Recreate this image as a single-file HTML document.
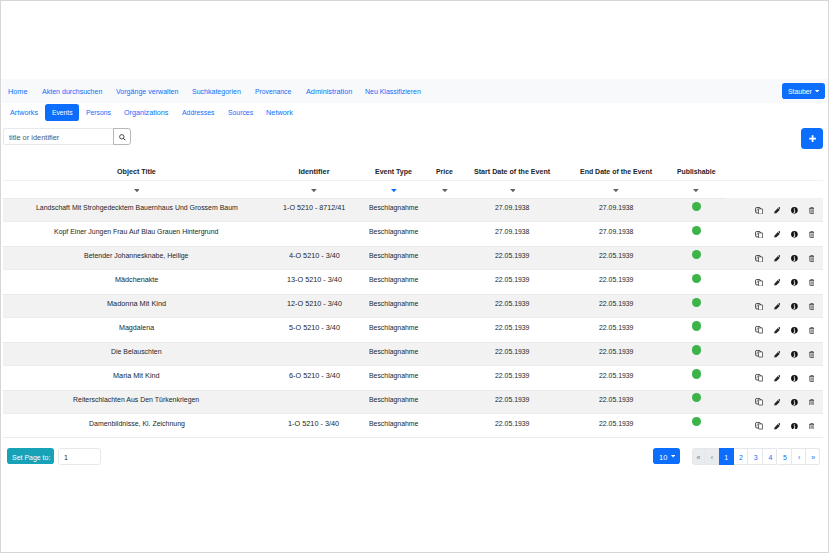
<!DOCTYPE html>
<html><head><meta charset="utf-8">
<style>
*{box-sizing:border-box;margin:0;padding:0}
html,body{width:829px;height:553px;overflow:hidden;background:#fff}
body{font-family:"Liberation Sans",sans-serif;font-size:6.9px;color:#212529;position:relative}
.frame{position:absolute;left:0;top:0;width:829px;height:553px;border:1px solid #d6d6d6}
.t{position:absolute;white-space:nowrap;transform-origin:0 0}
.navbar{position:absolute;left:2px;top:79px;width:826px;height:24.3px;background:#f8f9fa}
.btn-user{position:absolute;left:782px;top:82.8px;width:43.2px;height:16.2px;background:#0d6efd;border-radius:2.8px}
.pillbg{position:absolute;left:45.2px;top:103.6px;width:34.1px;height:17.4px;background:#0d6efd;border-radius:2.8px}
.search{position:absolute;left:3.4px;top:128px;width:110.5px;height:16.8px;border:1px solid #e6e8eb;border-right:none;border-radius:2.8px 0 0 2.8px}
.sbtn{position:absolute;left:113.3px;top:128px;width:17.9px;height:16.8px;border:1px solid #b3b8bd;border-radius:0 2.8px 2.8px 0}
.plus{position:absolute;left:801.4px;top:128.2px;width:21.8px;height:20.9px;background:#0d6efd;border-radius:3.5px}
.hline{position:absolute;left:3px;top:180px;width:820px;height:1px;background:#eff1f3}
.fline{position:absolute;left:3px;top:198px;width:722px;height:1px;background:#e9eaed}
.arr{position:absolute;top:189.7px;width:0;height:0;border-left:3.1px solid transparent;border-right:3.1px solid transparent;border-top:3.3px solid #6a6b6d}
.arr.blue{border-top-color:#0d6efd}
.row{position:absolute;left:3px;width:820px;height:24px}
.row.g{background:#f2f2f2}
.dot{position:absolute;width:9px;height:9.2px;border-radius:50%;background:#3db44a}
.ic{position:absolute}
.bline{position:absolute;left:3px;top:437px;width:820px;height:0.8px;background:#e9ebed}
.setbtn{position:absolute;left:6.9px;top:448.3px;width:47.5px;height:15.9px;background:#17a2b8;border-radius:2.8px}
.pin{position:absolute;left:58.4px;top:448.3px;width:42.9px;height:16.3px;border:0.6px solid #e6e8eb;border-radius:2.8px}
.ten{position:absolute;left:653.2px;top:448.2px;width:26.7px;height:16.3px;background:#0d6efd;border-radius:2.8px}
.pg{position:absolute;top:448.1px;height:16.5px;border:0.6px solid #e5e7ea;border-left:none}
.car{position:absolute;width:0;height:0;border-left:1.9px solid transparent;border-right:1.9px solid transparent;border-top:2.3px solid #fff}
</style></head><body>
<div class="frame"></div>
<div class="navbar"></div>
<span class="t" style="left:8.27px;top:86.61px;font-size:6.9px;line-height:10px;transform:scaleX(1.0584);color:#0d6efd">Home</span>
<span class="t" style="left:41.90px;top:86.61px;font-size:6.9px;line-height:10px;transform:scaleX(1.0233);color:#0d6efd">Akten durchsuchen</span>
<span class="t" style="left:115.90px;top:86.61px;font-size:6.9px;line-height:10px;transform:scaleX(1.0255);color:#0d6efd">Vorgänge verwalten</span>
<span class="t" style="left:192.39px;top:86.61px;font-size:6.9px;line-height:10px;transform:scaleX(1.0188);color:#0d6efd">Suchkategorien</span>
<span class="t" style="left:255.11px;top:86.61px;font-size:6.9px;line-height:10px;transform:scaleX(0.9865);color:#0d6efd">Provenance</span>
<span class="t" style="left:305.60px;top:86.61px;font-size:6.9px;line-height:10px;transform:scaleX(1.0605);color:#0d6efd">Administration</span>
<span class="t" style="left:365.29px;top:86.61px;font-size:6.9px;line-height:10px;transform:scaleX(1.0113);color:#0d6efd">Neu Klassifizieren</span>
<div class="btn-user"></div>
<span class="t" style="left:787.50px;top:86.61px;font-size:6.9px;line-height:10px;transform:scaleX(0.9887);color:#fff">Stauber</span>
<svg class="ic" style="left:815.3px;top:89.8px" width="4.2" height="2.6" viewBox="0 0 4.2 2.6"><path d="M0 0.1h4.2L2.1 2.5z" fill="#fff"/></svg>
<div class="pillbg"></div>
<span class="t" style="left:10.20px;top:108.27px;font-size:7.0px;line-height:10px;transform:scaleX(1.0287);color:#0d6efd">Artworks</span>
<span class="t" style="left:85.61px;top:108.27px;font-size:7.0px;line-height:10px;transform:scaleX(0.9728);color:#0d6efd">Persons</span>
<span class="t" style="left:124.19px;top:108.27px;font-size:7.0px;line-height:10px;transform:scaleX(1.0260);color:#0d6efd">Organizations</span>
<span class="t" style="left:182.00px;top:108.27px;font-size:7.0px;line-height:10px;transform:scaleX(0.9826);color:#0d6efd">Addresses</span>
<span class="t" style="left:227.71px;top:108.27px;font-size:7.0px;line-height:10px;transform:scaleX(0.9770);color:#0d6efd">Sources</span>
<span class="t" style="left:266.18px;top:108.27px;font-size:7.0px;line-height:10px;transform:scaleX(1.0486);color:#0d6efd">Network</span>
<span class="t" style="left:52.02px;top:108.27px;font-size:7.0px;line-height:10px;transform:scaleX(0.9614);color:#fff">Events</span>
<div class="search"></div>
<span class="t" style="left:8.69px;top:132.77px;font-size:7.0px;line-height:10px;transform:scaleX(1.0605);color:#53595f">title or identifier</span>
<div class="sbtn"></div>
<svg class="ic" style="left:118.9px;top:133.6px" width="7" height="7" viewBox="0 0 7 7"><circle cx="2.8" cy="2.8" r="2.2" fill="none" stroke="#2b2f33" stroke-width="0.85"/><path d="M4.35 4.35l1.9 1.9" stroke="#2b2f33" stroke-width="1"/></svg>
<div class="plus"></div>
<svg class="ic" style="left:808.9px;top:135px" width="7.2" height="7.2" viewBox="0 0 7.2 7.2"><path d="M3.6 0.2v6.8M0.2 3.6h6.8" stroke="#fff" stroke-width="1.8"/></svg>
<span class="t" style="left:117.31px;top:166.54px;font-size:7.4px;line-height:10px;transform:scaleX(0.9686);font-weight:700">Object Title</span>
<span class="t" style="left:298.40px;top:166.54px;font-size:7.4px;line-height:10px;font-weight:700">Identifier</span>
<span class="t" style="left:375.42px;top:166.54px;font-size:7.4px;line-height:10px;transform:scaleX(0.9500);font-weight:700">Event Type</span>
<span class="t" style="left:436.43px;top:166.54px;font-size:7.4px;line-height:10px;transform:scaleX(0.9264);font-weight:700">Price</span>
<span class="t" style="left:474.31px;top:166.54px;font-size:7.4px;line-height:10px;transform:scaleX(0.9609);font-weight:700">Start Date of the Event</span>
<span class="t" style="left:580.12px;top:166.54px;font-size:7.4px;line-height:10px;transform:scaleX(0.9433);font-weight:700">End Date of the Event</span>
<span class="t" style="left:676.83px;top:166.54px;font-size:7.4px;line-height:10px;transform:scaleX(0.9287);font-weight:700">Publishable</span>
<div class="hline"></div>
<svg class="ic" style="left:133.70px;top:189.3px" width="5.8" height="3.4" viewBox="0 0 5.8 3.4"><path d="M0 0.1h5.8L2.9 3.2z" fill="#5f6266"/></svg>
<svg class="ic" style="left:311.30px;top:189.3px" width="5.8" height="3.4" viewBox="0 0 5.8 3.4"><path d="M0 0.1h5.8L2.9 3.2z" fill="#5f6266"/></svg>
<svg class="ic" style="left:391.10px;top:189.3px" width="5.8" height="3.4" viewBox="0 0 5.8 3.4"><path d="M0 0.1h5.8L2.9 3.2z" fill="#0d6efd"/></svg>
<svg class="ic" style="left:442.00px;top:189.3px" width="5.8" height="3.4" viewBox="0 0 5.8 3.4"><path d="M0 0.1h5.8L2.9 3.2z" fill="#5f6266"/></svg>
<svg class="ic" style="left:509.60px;top:189.3px" width="5.8" height="3.4" viewBox="0 0 5.8 3.4"><path d="M0 0.1h5.8L2.9 3.2z" fill="#5f6266"/></svg>
<svg class="ic" style="left:613.40px;top:189.3px" width="5.8" height="3.4" viewBox="0 0 5.8 3.4"><path d="M0 0.1h5.8L2.9 3.2z" fill="#5f6266"/></svg>
<svg class="ic" style="left:693.30px;top:189.3px" width="5.8" height="3.4" viewBox="0 0 5.8 3.4"><path d="M0 0.1h5.8L2.9 3.2z" fill="#5f6266"/></svg>
<div class="row g" style="top:198px;height:24px;border-bottom:1px solid #ececee"></div>
<div class="row g" style="top:246px;height:24px;border-top:1px solid #e9eaed;border-bottom:1px solid #ececee"></div>
<div class="row g" style="top:294px;height:24px;border-top:1px solid #e9eaed;border-bottom:1px solid #ececee"></div>
<div class="row g" style="top:342px;height:24px;border-top:1px solid #e9eaed;border-bottom:1px solid #ececee"></div>
<div class="row g" style="top:390px;height:24px;border-top:1px solid #e9eaed;border-bottom:1px solid #ececee"></div>
<div class="fline"></div>
<span class="t" style="left:35.55px;top:203.47px;font-size:7.6px;line-height:10px;transform:scaleX(0.9140)">Landschaft Mit Strohgedecktem Bauernhaus Und Grossem Baum</span>
<span class="t" style="left:282.93px;top:203.47px;font-size:7.6px;line-height:10px;transform:scaleX(0.9464)">1-O 5210 - 8712/41</span>
<span class="t" style="left:369.16px;top:203.47px;font-size:7.6px;line-height:10px;transform:scaleX(0.9071)">Beschlagnahme</span>
<span class="t" style="left:495.28px;top:203.47px;font-size:7.6px;line-height:10px;transform:scaleX(0.9062)">27.09.1938</span>
<span class="t" style="left:599.08px;top:203.47px;font-size:7.6px;line-height:10px;transform:scaleX(0.9062)">27.09.1938</span>
<div class="dot" style="left:691.6px;top:201.70px"></div>
<svg class="ic" style="left:755px;top:206.70px" width="8.4" height="7.6" viewBox="0 0 8.4 7.6"><rect x="0.45" y="0.45" width="5.1" height="5.5" rx="1.5" fill="none" stroke="#2f3236" stroke-width="0.85"/><path d="M3.6 0.9L1.2 4.6" stroke="#2f3236" stroke-width="0.55"/><rect x="3.5" y="1.9" width="4.3" height="5.2" rx="0.5" fill="#fbfbfb" stroke="#3a3d41" stroke-width="0.75"/><path d="M7.8 2.2v4.8" stroke="#4a3f40" stroke-width="0.6"/></svg>
<svg class="ic" style="left:773.6px;top:207.30px" width="6.8" height="6.8" viewBox="0 0 6.8 6.8"><path d="M0.25 6.55l0.35-2.15 3.3-3.3 1.8 1.8-3.3 3.3z" fill="#24272b"/><path d="M4.3 0.7l0.55-0.5a0.6 0.6 0 0 1 0.8 0l0.95 0.95a0.6 0.6 0 0 1 0 0.8l-0.5 0.55z" fill="#1b1d20"/></svg>
<svg class="ic" style="left:790.9px;top:207.15px" width="6.8" height="6.8" viewBox="0 0 6.8 6.8"><circle cx="3.4" cy="3.35" r="3.3" fill="#111316"/><path d="M2.7 2.9h0.95v2.5M2.45 5.45h1.65" fill="none" stroke="#fff" stroke-width="0.85"/><circle cx="3.35" cy="1.75" r="0.6" fill="#fff"/></svg>
<svg class="ic" style="left:808.6px;top:207.10px" width="5.8" height="6.8" viewBox="0 0 5.8 6.8"><path d="M0.15 1.35h5.5" stroke="#2f3236" stroke-width="0.8"/><path d="M1.8 1.3V0.45h2.2v0.85" fill="none" stroke="#2f3236" stroke-width="0.65"/><path d="M0.85 1.6v4.4a0.55 0.55 0 0 0 0.55 0.45h3a0.55 0.55 0 0 0 0.55-0.45v-4.4" fill="none" stroke="#2f3236" stroke-width="0.8"/><path d="M2.35 2.4v3.2M3.45 2.4v3.2" stroke="#45484c" stroke-width="0.6"/></svg>
<span class="t" style="left:54.05px;top:227.42px;font-size:7.6px;line-height:10px;transform:scaleX(0.9143)">Kopf Einer Jungen Frau Auf Blau Grauen Hintergrund</span>
<span class="t" style="left:369.16px;top:227.42px;font-size:7.6px;line-height:10px;transform:scaleX(0.9071)">Beschlagnahme</span>
<span class="t" style="left:495.28px;top:227.42px;font-size:7.6px;line-height:10px;transform:scaleX(0.9062)">27.09.1938</span>
<span class="t" style="left:599.08px;top:227.42px;font-size:7.6px;line-height:10px;transform:scaleX(0.9062)">27.09.1938</span>
<div class="dot" style="left:691.6px;top:225.65px"></div>
<svg class="ic" style="left:755px;top:230.65px" width="8.4" height="7.6" viewBox="0 0 8.4 7.6"><rect x="0.45" y="0.45" width="5.1" height="5.5" rx="1.5" fill="none" stroke="#2f3236" stroke-width="0.85"/><path d="M3.6 0.9L1.2 4.6" stroke="#2f3236" stroke-width="0.55"/><rect x="3.5" y="1.9" width="4.3" height="5.2" rx="0.5" fill="#fbfbfb" stroke="#3a3d41" stroke-width="0.75"/><path d="M7.8 2.2v4.8" stroke="#4a3f40" stroke-width="0.6"/></svg>
<svg class="ic" style="left:773.6px;top:231.25px" width="6.8" height="6.8" viewBox="0 0 6.8 6.8"><path d="M0.25 6.55l0.35-2.15 3.3-3.3 1.8 1.8-3.3 3.3z" fill="#24272b"/><path d="M4.3 0.7l0.55-0.5a0.6 0.6 0 0 1 0.8 0l0.95 0.95a0.6 0.6 0 0 1 0 0.8l-0.5 0.55z" fill="#1b1d20"/></svg>
<svg class="ic" style="left:790.9px;top:231.10px" width="6.8" height="6.8" viewBox="0 0 6.8 6.8"><circle cx="3.4" cy="3.35" r="3.3" fill="#111316"/><path d="M2.7 2.9h0.95v2.5M2.45 5.45h1.65" fill="none" stroke="#fff" stroke-width="0.85"/><circle cx="3.35" cy="1.75" r="0.6" fill="#fff"/></svg>
<svg class="ic" style="left:808.6px;top:231.05px" width="5.8" height="6.8" viewBox="0 0 5.8 6.8"><path d="M0.15 1.35h5.5" stroke="#2f3236" stroke-width="0.8"/><path d="M1.8 1.3V0.45h2.2v0.85" fill="none" stroke="#2f3236" stroke-width="0.65"/><path d="M0.85 1.6v4.4a0.55 0.55 0 0 0 0.55 0.45h3a0.55 0.55 0 0 0 0.55-0.45v-4.4" fill="none" stroke="#2f3236" stroke-width="0.8"/><path d="M2.35 2.4v3.2M3.45 2.4v3.2" stroke="#45484c" stroke-width="0.6"/></svg>
<span class="t" style="left:84.20px;top:251.37px;font-size:7.6px;line-height:10px;transform:scaleX(0.9164)">Betender Johannesknabe, Heilige</span>
<span class="t" style="left:288.85px;top:251.37px;font-size:7.6px;line-height:10px;transform:scaleX(0.9545)">4-O 5210 - 3/40</span>
<span class="t" style="left:369.16px;top:251.37px;font-size:7.6px;line-height:10px;transform:scaleX(0.9071)">Beschlagnahme</span>
<span class="t" style="left:495.28px;top:251.37px;font-size:7.6px;line-height:10px;transform:scaleX(0.9062)">22.05.1939</span>
<span class="t" style="left:599.08px;top:251.37px;font-size:7.6px;line-height:10px;transform:scaleX(0.9062)">22.05.1939</span>
<div class="dot" style="left:691.6px;top:249.60px"></div>
<svg class="ic" style="left:755px;top:254.60px" width="8.4" height="7.6" viewBox="0 0 8.4 7.6"><rect x="0.45" y="0.45" width="5.1" height="5.5" rx="1.5" fill="none" stroke="#2f3236" stroke-width="0.85"/><path d="M3.6 0.9L1.2 4.6" stroke="#2f3236" stroke-width="0.55"/><rect x="3.5" y="1.9" width="4.3" height="5.2" rx="0.5" fill="#fbfbfb" stroke="#3a3d41" stroke-width="0.75"/><path d="M7.8 2.2v4.8" stroke="#4a3f40" stroke-width="0.6"/></svg>
<svg class="ic" style="left:773.6px;top:255.20px" width="6.8" height="6.8" viewBox="0 0 6.8 6.8"><path d="M0.25 6.55l0.35-2.15 3.3-3.3 1.8 1.8-3.3 3.3z" fill="#24272b"/><path d="M4.3 0.7l0.55-0.5a0.6 0.6 0 0 1 0.8 0l0.95 0.95a0.6 0.6 0 0 1 0 0.8l-0.5 0.55z" fill="#1b1d20"/></svg>
<svg class="ic" style="left:790.9px;top:255.05px" width="6.8" height="6.8" viewBox="0 0 6.8 6.8"><circle cx="3.4" cy="3.35" r="3.3" fill="#111316"/><path d="M2.7 2.9h0.95v2.5M2.45 5.45h1.65" fill="none" stroke="#fff" stroke-width="0.85"/><circle cx="3.35" cy="1.75" r="0.6" fill="#fff"/></svg>
<svg class="ic" style="left:808.6px;top:255.00px" width="5.8" height="6.8" viewBox="0 0 5.8 6.8"><path d="M0.15 1.35h5.5" stroke="#2f3236" stroke-width="0.8"/><path d="M1.8 1.3V0.45h2.2v0.85" fill="none" stroke="#2f3236" stroke-width="0.65"/><path d="M0.85 1.6v4.4a0.55 0.55 0 0 0 0.55 0.45h3a0.55 0.55 0 0 0 0.55-0.45v-4.4" fill="none" stroke="#2f3236" stroke-width="0.8"/><path d="M2.35 2.4v3.2M3.45 2.4v3.2" stroke="#45484c" stroke-width="0.6"/></svg>
<span class="t" style="left:114.78px;top:275.32px;font-size:7.6px;line-height:10px;transform:scaleX(0.9507)">Mädchenakte</span>
<span class="t" style="left:286.57px;top:275.32px;font-size:7.6px;line-height:10px;transform:scaleX(0.9571)">13-O 5210 - 3/40</span>
<span class="t" style="left:369.16px;top:275.32px;font-size:7.6px;line-height:10px;transform:scaleX(0.9071)">Beschlagnahme</span>
<span class="t" style="left:495.28px;top:275.32px;font-size:7.6px;line-height:10px;transform:scaleX(0.9062)">22.05.1939</span>
<span class="t" style="left:599.08px;top:275.32px;font-size:7.6px;line-height:10px;transform:scaleX(0.9062)">22.05.1939</span>
<div class="dot" style="left:691.6px;top:273.55px"></div>
<svg class="ic" style="left:755px;top:278.55px" width="8.4" height="7.6" viewBox="0 0 8.4 7.6"><rect x="0.45" y="0.45" width="5.1" height="5.5" rx="1.5" fill="none" stroke="#2f3236" stroke-width="0.85"/><path d="M3.6 0.9L1.2 4.6" stroke="#2f3236" stroke-width="0.55"/><rect x="3.5" y="1.9" width="4.3" height="5.2" rx="0.5" fill="#fbfbfb" stroke="#3a3d41" stroke-width="0.75"/><path d="M7.8 2.2v4.8" stroke="#4a3f40" stroke-width="0.6"/></svg>
<svg class="ic" style="left:773.6px;top:279.15px" width="6.8" height="6.8" viewBox="0 0 6.8 6.8"><path d="M0.25 6.55l0.35-2.15 3.3-3.3 1.8 1.8-3.3 3.3z" fill="#24272b"/><path d="M4.3 0.7l0.55-0.5a0.6 0.6 0 0 1 0.8 0l0.95 0.95a0.6 0.6 0 0 1 0 0.8l-0.5 0.55z" fill="#1b1d20"/></svg>
<svg class="ic" style="left:790.9px;top:279.00px" width="6.8" height="6.8" viewBox="0 0 6.8 6.8"><circle cx="3.4" cy="3.35" r="3.3" fill="#111316"/><path d="M2.7 2.9h0.95v2.5M2.45 5.45h1.65" fill="none" stroke="#fff" stroke-width="0.85"/><circle cx="3.35" cy="1.75" r="0.6" fill="#fff"/></svg>
<svg class="ic" style="left:808.6px;top:278.95px" width="5.8" height="6.8" viewBox="0 0 5.8 6.8"><path d="M0.15 1.35h5.5" stroke="#2f3236" stroke-width="0.8"/><path d="M1.8 1.3V0.45h2.2v0.85" fill="none" stroke="#2f3236" stroke-width="0.65"/><path d="M0.85 1.6v4.4a0.55 0.55 0 0 0 0.55 0.45h3a0.55 0.55 0 0 0 0.55-0.45v-4.4" fill="none" stroke="#2f3236" stroke-width="0.8"/><path d="M2.35 2.4v3.2M3.45 2.4v3.2" stroke="#45484c" stroke-width="0.6"/></svg>
<span class="t" style="left:106.97px;top:299.27px;font-size:7.6px;line-height:10px;transform:scaleX(0.9646)">Madonna Mit Kind</span>
<span class="t" style="left:286.57px;top:299.27px;font-size:7.6px;line-height:10px;transform:scaleX(0.9571)">12-O 5210 - 3/40</span>
<span class="t" style="left:369.16px;top:299.27px;font-size:7.6px;line-height:10px;transform:scaleX(0.9071)">Beschlagnahme</span>
<span class="t" style="left:495.28px;top:299.27px;font-size:7.6px;line-height:10px;transform:scaleX(0.9062)">22.05.1939</span>
<span class="t" style="left:599.08px;top:299.27px;font-size:7.6px;line-height:10px;transform:scaleX(0.9062)">22.05.1939</span>
<div class="dot" style="left:691.6px;top:297.50px"></div>
<svg class="ic" style="left:755px;top:302.50px" width="8.4" height="7.6" viewBox="0 0 8.4 7.6"><rect x="0.45" y="0.45" width="5.1" height="5.5" rx="1.5" fill="none" stroke="#2f3236" stroke-width="0.85"/><path d="M3.6 0.9L1.2 4.6" stroke="#2f3236" stroke-width="0.55"/><rect x="3.5" y="1.9" width="4.3" height="5.2" rx="0.5" fill="#fbfbfb" stroke="#3a3d41" stroke-width="0.75"/><path d="M7.8 2.2v4.8" stroke="#4a3f40" stroke-width="0.6"/></svg>
<svg class="ic" style="left:773.6px;top:303.10px" width="6.8" height="6.8" viewBox="0 0 6.8 6.8"><path d="M0.25 6.55l0.35-2.15 3.3-3.3 1.8 1.8-3.3 3.3z" fill="#24272b"/><path d="M4.3 0.7l0.55-0.5a0.6 0.6 0 0 1 0.8 0l0.95 0.95a0.6 0.6 0 0 1 0 0.8l-0.5 0.55z" fill="#1b1d20"/></svg>
<svg class="ic" style="left:790.9px;top:302.95px" width="6.8" height="6.8" viewBox="0 0 6.8 6.8"><circle cx="3.4" cy="3.35" r="3.3" fill="#111316"/><path d="M2.7 2.9h0.95v2.5M2.45 5.45h1.65" fill="none" stroke="#fff" stroke-width="0.85"/><circle cx="3.35" cy="1.75" r="0.6" fill="#fff"/></svg>
<svg class="ic" style="left:808.6px;top:302.90px" width="5.8" height="6.8" viewBox="0 0 5.8 6.8"><path d="M0.15 1.35h5.5" stroke="#2f3236" stroke-width="0.8"/><path d="M1.8 1.3V0.45h2.2v0.85" fill="none" stroke="#2f3236" stroke-width="0.65"/><path d="M0.85 1.6v4.4a0.55 0.55 0 0 0 0.55 0.45h3a0.55 0.55 0 0 0 0.55-0.45v-4.4" fill="none" stroke="#2f3236" stroke-width="0.8"/><path d="M2.35 2.4v3.2M3.45 2.4v3.2" stroke="#45484c" stroke-width="0.6"/></svg>
<span class="t" style="left:118.69px;top:323.22px;font-size:7.6px;line-height:10px;transform:scaleX(0.9358)">Magdalena</span>
<span class="t" style="left:288.66px;top:323.22px;font-size:7.6px;line-height:10px;transform:scaleX(0.9581)">5-O 5210 - 3/40</span>
<span class="t" style="left:369.16px;top:323.22px;font-size:7.6px;line-height:10px;transform:scaleX(0.9071)">Beschlagnahme</span>
<span class="t" style="left:495.28px;top:323.22px;font-size:7.6px;line-height:10px;transform:scaleX(0.9062)">22.05.1939</span>
<span class="t" style="left:599.08px;top:323.22px;font-size:7.6px;line-height:10px;transform:scaleX(0.9062)">22.05.1939</span>
<div class="dot" style="left:691.6px;top:321.45px"></div>
<svg class="ic" style="left:755px;top:326.45px" width="8.4" height="7.6" viewBox="0 0 8.4 7.6"><rect x="0.45" y="0.45" width="5.1" height="5.5" rx="1.5" fill="none" stroke="#2f3236" stroke-width="0.85"/><path d="M3.6 0.9L1.2 4.6" stroke="#2f3236" stroke-width="0.55"/><rect x="3.5" y="1.9" width="4.3" height="5.2" rx="0.5" fill="#fbfbfb" stroke="#3a3d41" stroke-width="0.75"/><path d="M7.8 2.2v4.8" stroke="#4a3f40" stroke-width="0.6"/></svg>
<svg class="ic" style="left:773.6px;top:327.05px" width="6.8" height="6.8" viewBox="0 0 6.8 6.8"><path d="M0.25 6.55l0.35-2.15 3.3-3.3 1.8 1.8-3.3 3.3z" fill="#24272b"/><path d="M4.3 0.7l0.55-0.5a0.6 0.6 0 0 1 0.8 0l0.95 0.95a0.6 0.6 0 0 1 0 0.8l-0.5 0.55z" fill="#1b1d20"/></svg>
<svg class="ic" style="left:790.9px;top:326.90px" width="6.8" height="6.8" viewBox="0 0 6.8 6.8"><circle cx="3.4" cy="3.35" r="3.3" fill="#111316"/><path d="M2.7 2.9h0.95v2.5M2.45 5.45h1.65" fill="none" stroke="#fff" stroke-width="0.85"/><circle cx="3.35" cy="1.75" r="0.6" fill="#fff"/></svg>
<svg class="ic" style="left:808.6px;top:326.85px" width="5.8" height="6.8" viewBox="0 0 5.8 6.8"><path d="M0.15 1.35h5.5" stroke="#2f3236" stroke-width="0.8"/><path d="M1.8 1.3V0.45h2.2v0.85" fill="none" stroke="#2f3236" stroke-width="0.65"/><path d="M0.85 1.6v4.4a0.55 0.55 0 0 0 0.55 0.45h3a0.55 0.55 0 0 0 0.55-0.45v-4.4" fill="none" stroke="#2f3236" stroke-width="0.8"/><path d="M2.35 2.4v3.2M3.45 2.4v3.2" stroke="#45484c" stroke-width="0.6"/></svg>
<span class="t" style="left:111.20px;top:347.17px;font-size:7.6px;line-height:10px;transform:scaleX(0.9150)">Die Belauschten</span>
<span class="t" style="left:369.16px;top:347.17px;font-size:7.6px;line-height:10px;transform:scaleX(0.9071)">Beschlagnahme</span>
<span class="t" style="left:495.28px;top:347.17px;font-size:7.6px;line-height:10px;transform:scaleX(0.9062)">22.05.1939</span>
<span class="t" style="left:599.08px;top:347.17px;font-size:7.6px;line-height:10px;transform:scaleX(0.9062)">22.05.1939</span>
<div class="dot" style="left:691.6px;top:345.40px"></div>
<svg class="ic" style="left:755px;top:350.40px" width="8.4" height="7.6" viewBox="0 0 8.4 7.6"><rect x="0.45" y="0.45" width="5.1" height="5.5" rx="1.5" fill="none" stroke="#2f3236" stroke-width="0.85"/><path d="M3.6 0.9L1.2 4.6" stroke="#2f3236" stroke-width="0.55"/><rect x="3.5" y="1.9" width="4.3" height="5.2" rx="0.5" fill="#fbfbfb" stroke="#3a3d41" stroke-width="0.75"/><path d="M7.8 2.2v4.8" stroke="#4a3f40" stroke-width="0.6"/></svg>
<svg class="ic" style="left:773.6px;top:351.00px" width="6.8" height="6.8" viewBox="0 0 6.8 6.8"><path d="M0.25 6.55l0.35-2.15 3.3-3.3 1.8 1.8-3.3 3.3z" fill="#24272b"/><path d="M4.3 0.7l0.55-0.5a0.6 0.6 0 0 1 0.8 0l0.95 0.95a0.6 0.6 0 0 1 0 0.8l-0.5 0.55z" fill="#1b1d20"/></svg>
<svg class="ic" style="left:790.9px;top:350.85px" width="6.8" height="6.8" viewBox="0 0 6.8 6.8"><circle cx="3.4" cy="3.35" r="3.3" fill="#111316"/><path d="M2.7 2.9h0.95v2.5M2.45 5.45h1.65" fill="none" stroke="#fff" stroke-width="0.85"/><circle cx="3.35" cy="1.75" r="0.6" fill="#fff"/></svg>
<svg class="ic" style="left:808.6px;top:350.80px" width="5.8" height="6.8" viewBox="0 0 5.8 6.8"><path d="M0.15 1.35h5.5" stroke="#2f3236" stroke-width="0.8"/><path d="M1.8 1.3V0.45h2.2v0.85" fill="none" stroke="#2f3236" stroke-width="0.65"/><path d="M0.85 1.6v4.4a0.55 0.55 0 0 0 0.55 0.45h3a0.55 0.55 0 0 0 0.55-0.45v-4.4" fill="none" stroke="#2f3236" stroke-width="0.8"/><path d="M2.35 2.4v3.2M3.45 2.4v3.2" stroke="#45484c" stroke-width="0.6"/></svg>
<span class="t" style="left:113.17px;top:371.12px;font-size:7.6px;line-height:10px;transform:scaleX(0.9613)">Maria Mit Kind</span>
<span class="t" style="left:288.66px;top:371.12px;font-size:7.6px;line-height:10px;transform:scaleX(0.9581)">6-O 5210 - 3/40</span>
<span class="t" style="left:369.16px;top:371.12px;font-size:7.6px;line-height:10px;transform:scaleX(0.9071)">Beschlagnahme</span>
<span class="t" style="left:495.28px;top:371.12px;font-size:7.6px;line-height:10px;transform:scaleX(0.9062)">22.05.1939</span>
<span class="t" style="left:599.08px;top:371.12px;font-size:7.6px;line-height:10px;transform:scaleX(0.9062)">22.05.1939</span>
<div class="dot" style="left:691.6px;top:369.35px"></div>
<svg class="ic" style="left:755px;top:374.35px" width="8.4" height="7.6" viewBox="0 0 8.4 7.6"><rect x="0.45" y="0.45" width="5.1" height="5.5" rx="1.5" fill="none" stroke="#2f3236" stroke-width="0.85"/><path d="M3.6 0.9L1.2 4.6" stroke="#2f3236" stroke-width="0.55"/><rect x="3.5" y="1.9" width="4.3" height="5.2" rx="0.5" fill="#fbfbfb" stroke="#3a3d41" stroke-width="0.75"/><path d="M7.8 2.2v4.8" stroke="#4a3f40" stroke-width="0.6"/></svg>
<svg class="ic" style="left:773.6px;top:374.95px" width="6.8" height="6.8" viewBox="0 0 6.8 6.8"><path d="M0.25 6.55l0.35-2.15 3.3-3.3 1.8 1.8-3.3 3.3z" fill="#24272b"/><path d="M4.3 0.7l0.55-0.5a0.6 0.6 0 0 1 0.8 0l0.95 0.95a0.6 0.6 0 0 1 0 0.8l-0.5 0.55z" fill="#1b1d20"/></svg>
<svg class="ic" style="left:790.9px;top:374.80px" width="6.8" height="6.8" viewBox="0 0 6.8 6.8"><circle cx="3.4" cy="3.35" r="3.3" fill="#111316"/><path d="M2.7 2.9h0.95v2.5M2.45 5.45h1.65" fill="none" stroke="#fff" stroke-width="0.85"/><circle cx="3.35" cy="1.75" r="0.6" fill="#fff"/></svg>
<svg class="ic" style="left:808.6px;top:374.75px" width="5.8" height="6.8" viewBox="0 0 5.8 6.8"><path d="M0.15 1.35h5.5" stroke="#2f3236" stroke-width="0.8"/><path d="M1.8 1.3V0.45h2.2v0.85" fill="none" stroke="#2f3236" stroke-width="0.65"/><path d="M0.85 1.6v4.4a0.55 0.55 0 0 0 0.55 0.45h3a0.55 0.55 0 0 0 0.55-0.45v-4.4" fill="none" stroke="#2f3236" stroke-width="0.8"/><path d="M2.35 2.4v3.2M3.45 2.4v3.2" stroke="#45484c" stroke-width="0.6"/></svg>
<span class="t" style="left:73.10px;top:395.07px;font-size:7.6px;line-height:10px;transform:scaleX(0.9154)">Reiterschlachten Aus Den Türkenkriegen</span>
<span class="t" style="left:369.16px;top:395.07px;font-size:7.6px;line-height:10px;transform:scaleX(0.9071)">Beschlagnahme</span>
<span class="t" style="left:495.28px;top:395.07px;font-size:7.6px;line-height:10px;transform:scaleX(0.9062)">22.05.1939</span>
<span class="t" style="left:599.08px;top:395.07px;font-size:7.6px;line-height:10px;transform:scaleX(0.9062)">22.05.1939</span>
<div class="dot" style="left:691.6px;top:393.30px"></div>
<svg class="ic" style="left:755px;top:398.30px" width="8.4" height="7.6" viewBox="0 0 8.4 7.6"><rect x="0.45" y="0.45" width="5.1" height="5.5" rx="1.5" fill="none" stroke="#2f3236" stroke-width="0.85"/><path d="M3.6 0.9L1.2 4.6" stroke="#2f3236" stroke-width="0.55"/><rect x="3.5" y="1.9" width="4.3" height="5.2" rx="0.5" fill="#fbfbfb" stroke="#3a3d41" stroke-width="0.75"/><path d="M7.8 2.2v4.8" stroke="#4a3f40" stroke-width="0.6"/></svg>
<svg class="ic" style="left:773.6px;top:398.90px" width="6.8" height="6.8" viewBox="0 0 6.8 6.8"><path d="M0.25 6.55l0.35-2.15 3.3-3.3 1.8 1.8-3.3 3.3z" fill="#24272b"/><path d="M4.3 0.7l0.55-0.5a0.6 0.6 0 0 1 0.8 0l0.95 0.95a0.6 0.6 0 0 1 0 0.8l-0.5 0.55z" fill="#1b1d20"/></svg>
<svg class="ic" style="left:790.9px;top:398.75px" width="6.8" height="6.8" viewBox="0 0 6.8 6.8"><circle cx="3.4" cy="3.35" r="3.3" fill="#111316"/><path d="M2.7 2.9h0.95v2.5M2.45 5.45h1.65" fill="none" stroke="#fff" stroke-width="0.85"/><circle cx="3.35" cy="1.75" r="0.6" fill="#fff"/></svg>
<svg class="ic" style="left:808.6px;top:398.70px" width="5.8" height="6.8" viewBox="0 0 5.8 6.8"><path d="M0.15 1.35h5.5" stroke="#2f3236" stroke-width="0.8"/><path d="M1.8 1.3V0.45h2.2v0.85" fill="none" stroke="#2f3236" stroke-width="0.65"/><path d="M0.85 1.6v4.4a0.55 0.55 0 0 0 0.55 0.45h3a0.55 0.55 0 0 0 0.55-0.45v-4.4" fill="none" stroke="#2f3236" stroke-width="0.8"/><path d="M2.35 2.4v3.2M3.45 2.4v3.2" stroke="#45484c" stroke-width="0.6"/></svg>
<span class="t" style="left:88.50px;top:419.02px;font-size:7.6px;line-height:10px;transform:scaleX(0.9167)">Damenbildnisse, Kl. Zeichnung</span>
<span class="t" style="left:288.47px;top:419.02px;font-size:7.6px;line-height:10px;transform:scaleX(0.9618)">1-O 5210 - 3/40</span>
<span class="t" style="left:369.16px;top:419.02px;font-size:7.6px;line-height:10px;transform:scaleX(0.9071)">Beschlagnahme</span>
<span class="t" style="left:495.28px;top:419.02px;font-size:7.6px;line-height:10px;transform:scaleX(0.9062)">22.05.1939</span>
<span class="t" style="left:599.08px;top:419.02px;font-size:7.6px;line-height:10px;transform:scaleX(0.9062)">22.05.1939</span>
<div class="dot" style="left:691.6px;top:417.25px"></div>
<svg class="ic" style="left:755px;top:422.25px" width="8.4" height="7.6" viewBox="0 0 8.4 7.6"><rect x="0.45" y="0.45" width="5.1" height="5.5" rx="1.5" fill="none" stroke="#2f3236" stroke-width="0.85"/><path d="M3.6 0.9L1.2 4.6" stroke="#2f3236" stroke-width="0.55"/><rect x="3.5" y="1.9" width="4.3" height="5.2" rx="0.5" fill="#fbfbfb" stroke="#3a3d41" stroke-width="0.75"/><path d="M7.8 2.2v4.8" stroke="#4a3f40" stroke-width="0.6"/></svg>
<svg class="ic" style="left:773.6px;top:422.85px" width="6.8" height="6.8" viewBox="0 0 6.8 6.8"><path d="M0.25 6.55l0.35-2.15 3.3-3.3 1.8 1.8-3.3 3.3z" fill="#24272b"/><path d="M4.3 0.7l0.55-0.5a0.6 0.6 0 0 1 0.8 0l0.95 0.95a0.6 0.6 0 0 1 0 0.8l-0.5 0.55z" fill="#1b1d20"/></svg>
<svg class="ic" style="left:790.9px;top:422.70px" width="6.8" height="6.8" viewBox="0 0 6.8 6.8"><circle cx="3.4" cy="3.35" r="3.3" fill="#111316"/><path d="M2.7 2.9h0.95v2.5M2.45 5.45h1.65" fill="none" stroke="#fff" stroke-width="0.85"/><circle cx="3.35" cy="1.75" r="0.6" fill="#fff"/></svg>
<svg class="ic" style="left:808.6px;top:422.65px" width="5.8" height="6.8" viewBox="0 0 5.8 6.8"><path d="M0.15 1.35h5.5" stroke="#2f3236" stroke-width="0.8"/><path d="M1.8 1.3V0.45h2.2v0.85" fill="none" stroke="#2f3236" stroke-width="0.65"/><path d="M0.85 1.6v4.4a0.55 0.55 0 0 0 0.55 0.45h3a0.55 0.55 0 0 0 0.55-0.45v-4.4" fill="none" stroke="#2f3236" stroke-width="0.8"/><path d="M2.35 2.4v3.2M3.45 2.4v3.2" stroke="#45484c" stroke-width="0.6"/></svg>
<div class="bline"></div>
<div class="setbtn"></div>
<span class="t" style="left:11.60px;top:452.97px;font-size:7.0px;line-height:10px;transform:scaleX(0.9952);color:#fff">Set Page to:</span>
<div class="pin"></div>
<span class="t" style="left:64.10px;top:452.97px;font-size:7.0px;line-height:10px;color:#212529">1</span>
<div class="ten"></div>
<span class="t" style="left:658.86px;top:452.97px;font-size:7.0px;line-height:10px;transform:scaleX(1.0715);color:#fff">10</span>
<svg class="ic" style="left:670.8px;top:455.3px" width="4.2" height="2.6" viewBox="0 0 4.2 2.6"><path d="M0 0.1h4.2L2.1 2.5z" fill="#fff"/></svg>
<div class="pg" style="left:691.6px;width:13.40px;border-left:0.6px solid #e5e7ea;border-radius:2.8px 0 0 2.8px;background:#e9ecef"></div>
<span class="t" style="left:696.50px;top:452.97px;font-size:7.0px;line-height:10px;color:#6c757d">«</span>
<div class="pg" style="left:705px;width:13.90px;background:#e9ecef"></div>
<span class="t" style="left:710.83px;top:452.97px;font-size:7.0px;line-height:10px;color:#6c757d">‹</span>
<div class="pg" style="left:718.9px;width:14.90px;background:#0d6efd;border-color:#0d6efd"></div>
<span class="t" style="left:724.25px;top:452.97px;font-size:7.0px;line-height:10px;color:#fff">1</span>
<div class="pg" style="left:733.8px;width:14.40px"></div>
<span class="t" style="left:739.10px;top:452.97px;font-size:7.0px;line-height:10px;color:#0d6efd">2</span>
<div class="pg" style="left:748.2px;width:14.90px"></div>
<span class="t" style="left:753.85px;top:452.97px;font-size:7.0px;line-height:10px;color:#0d6efd">3</span>
<div class="pg" style="left:763.1px;width:14.40px"></div>
<span class="t" style="left:768.60px;top:452.97px;font-size:7.0px;line-height:10px;color:#0d6efd">4</span>
<div class="pg" style="left:777.5px;width:14.70px"></div>
<span class="t" style="left:783.05px;top:452.97px;font-size:7.0px;line-height:10px;color:#0d6efd">5</span>
<div class="pg" style="left:792.2px;width:13.70px"></div>
<span class="t" style="left:797.93px;top:452.97px;font-size:7.0px;line-height:10px;color:#0d6efd">›</span>
<div class="pg" style="left:805.9px;width:14.10px;border-radius:0 2.8px 2.8px 0"></div>
<span class="t" style="left:811.15px;top:452.97px;font-size:7.0px;line-height:10px;color:#0d6efd">»</span>
</body></html>
